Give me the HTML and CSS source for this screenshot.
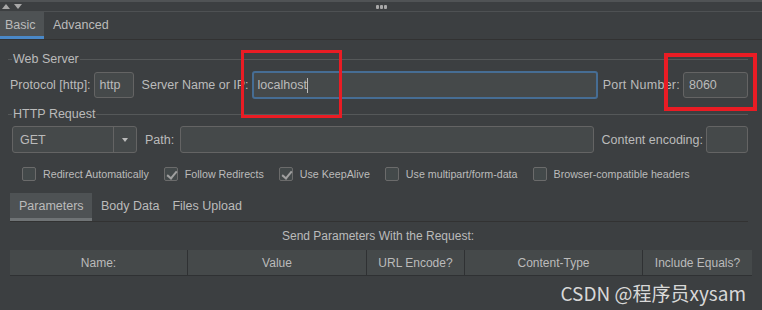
FILE: index.html
```html
<!DOCTYPE html>
<html lang="en">
<head>
    <meta charset="UTF-8">
    <meta name="viewport" content="width=device-width, initial-scale=1.0">
    <title>HTTP Request - Basic</title>
    <link rel="stylesheet" href="styles.css">
</head>
<body>
    <div class="splitbar">
        <div class="arrows">
            <span class="tri up"></span>
            <span class="tri down"></span>
        </div>
        <div class="grip"><i></i><i></i><i></i></div>
        <div></div>
    </div>

    <div class="tabs">
        <div class="tab active">Basic</div>
        <div class="tab">Advanced</div>
    </div>

    <div class="panel">
        <div class="group-title"><span>Web Server</span></div>

        <div class="row server-row">
            <label>Protocol [http]:</label>
            <div class="field proto">http</div>
            <label class="spaced">Server Name or IP:</label>
            <div class="field grow focused">localhost<span class="caret"></span></div>
            <label class="spaced port-label">Port Number:</label>
            <div class="field port">8060</div>
        </div>

        <div class="group-title second"><span>HTTP Request</span></div>

        <div class="row request-row">
            <div class="combo">
                <span class="combo-value">GET</span>
                <span class="combo-btn"><span class="tri down"></span></span>
            </div>
            <label class="spaced path-label">Path:</label>
            <div class="field grow"></div>
            <label class="spaced">Content encoding:</label>
            <div class="field enc"></div>
        </div>

        <div class="checks">
            <div class="check"><span class="box"></span>Redirect Automatically</div>
            <div class="check"><span class="box checked"></span>Follow Redirects</div>
            <div class="check"><span class="box checked"></span>Use KeepAlive</div>
            <div class="check"><span class="box"></span>Use multipart/form-data</div>
            <div class="check"><span class="box"></span>Browser-compatible headers</div>
        </div>

        <div class="subtabs">
            <div class="subtab active">Parameters</div>
            <div class="subtab">Body Data</div>
            <div class="subtab">Files Upload</div>
        </div>

        <div class="caption">Send Parameters With the Request:</div>

        <div class="table-head">
            <div>Name:</div>
            <div>Value</div>
            <div>URL Encode?</div>
            <div>Content-Type</div>
            <div>Include Equals?</div>
        </div>
    </div>

    <!-- 标注框 -->
    <div class="mark mark-server"></div>
    <div class="mark mark-port"></div>

    <div class="watermark">CSDN @程序员xysam</div>
</body>
</html>
```

FILE: styles.css
```css
* {
    box-sizing: border-box;
    margin: 0;
    padding: 0;
}

body {
    position: relative;
    width: 762px;
    height: 310px;
    overflow: hidden;
    background-color: #3c3f41;
    color: #bbbbbb;
    font-family: "Liberation Sans", Arial, sans-serif;
    font-size: 12px;
}

/* top split bar */
.splitbar {
    display: grid;
    grid-template-columns: 1fr auto 1fr;
    align-items: center;
    height: 12px;
    border-top: 2px solid #505355;
    border-bottom: 1px solid #4e5153;
}

.arrows {
    display: flex;
    gap: 4px;
    padding-left: 2px;
}

.tri {
    display: inline-block;
    width: 0;
    height: 0;
    border-left: 4px solid transparent;
    border-right: 4px solid transparent;
}

.tri.up {
    border-bottom: 5px solid #a8a8a8;
}

.tri.down {
    border-top: 5px solid #a8a8a8;
}

.grip {
    display: flex;
    gap: 1px;
}

.grip i {
    width: 3px;
    height: 4px;
    border-radius: 1px;
    background-color: #a8a8a8;
}

/* main tabs */
.tabs {
    display: flex;
    height: 28px;
    border-bottom: 1px solid #323232;
}

.tab {
    display: flex;
    align-items: center;
    padding: 0 8px 0 5px;
    font-size: 12.5px;
    border-bottom: 3px solid transparent;
    padding-top: 2px;
}

.tab.active {
    width: 44px;
    background-color: #4e5254;
    border-bottom-color: #4a88c7;
}

.tab + .tab {
    padding-left: 9px;
}

.panel {
    padding: 0 14px 0 8px;
}

.group-title {
    display: flex;
    align-items: center;
    height: 14px;
    margin-top: 12px;
}

.group-title.second {
    margin-top: 8px;
}

.group-title::before {
    content: "";
    width: 4px;
    border-top: 1px solid #555859;
}

.group-title::after {
    content: "";
    flex: 1;
    border-top: 1px solid #555859;
}

.group-title span {
    padding: 0 1px;
    font-size: 12.5px;
}

.row {
    display: flex;
    align-items: center;
    height: 28px;
    margin-top: 5px;
    font-size: 12.5px;
}

.server-row {
    padding-left: 2px;
}

.row label {
    margin-right: 3px;
    white-space: nowrap;
}

.row label.spaced {
    margin-left: 8px;
}

.row label.port-label {
    margin-left: 5px;
    letter-spacing: 0.25px;
}

.field {
    display: flex;
    align-items: center;
    height: 26px;
    padding: 0 5px;
    background-color: #45494a;
    border: 1px solid #646464;
    border-radius: 3px;
    color: #bbbbbb;
}

.field.grow {
    flex: 1;
}

.field.focused {
    height: 28px;
    border: 2px solid #466d94;
    padding-left: 4px;
}

.caret {
    display: inline-block;
    width: 1px;
    height: 15px;
    background-color: #bbbbbb;
}

.proto {
    width: 40px;
}

.port {
    width: 65px;
}

.request-row {
    height: 27px;
    margin-top: 5px;
    padding-left: 4px;
}

.request-row .field {
    height: 27px;
}

.row label.path-label {
    margin-right: 6px;
}

.combo {
    display: flex;
    width: 125px;
    height: 27px;
    background-color: #45494a;
    border: 1px solid #646464;
    border-radius: 3px;
}

.combo-value {
    flex: 1;
    display: flex;
    align-items: center;
    padding-left: 7px;
}

.combo-btn {
    display: flex;
    align-items: center;
    justify-content: center;
    width: 23px;
    border-left: 1px solid #646464;
}

.combo-btn .tri.down {
    border-left-width: 3px;
    border-right-width: 3px;
    border-top: 4px solid #bbbbbb;
}

.enc {
    width: 42px;
}

/* check boxes */
.checks {
    display: flex;
    align-items: center;
    gap: 15px;
    height: 14px;
    margin-top: 14px;
    padding-left: 14px;
    font-size: 10.7px;
}

.check {
    display: flex;
    align-items: center;
    gap: 7px;
    white-space: nowrap;
}

.box {
    position: relative;
    width: 14px;
    height: 14px;
    background-color: #43494a;
    border: 1px solid #6b6b6b;
    border-radius: 2px;
}

.box.checked::after {
    content: "";
    position: absolute;
    left: 4px;
    top: 1px;
    width: 4px;
    height: 8px;
    border-right: 2px solid #a0a0a0;
    border-bottom: 2px solid #a0a0a0;
    transform: rotate(40deg);
}

/* lower tabs */
.subtabs {
    display: flex;
    height: 29px;
    margin-top: 12px;
    margin-left: 2px;
    border-bottom: 1px solid #323232;
    font-size: 12.5px;
}

.subtab {
    display: flex;
    align-items: center;
    padding: 0 4px 0 9px;
    border-bottom: 3px solid transparent;
    padding-top: 1px;
}

.subtab.active {
    width: 82px;
    background-color: #4e5254;
    border-bottom-color: #6f7375;
}

.caption {
    height: 14px;
    margin-top: 7px;
    text-align: center;
    font-size: 12px;
}

.table-head {
    display: grid;
    grid-template-columns: 178px 179px 98px 178px 1fr;
    height: 26px;
    margin: 7px -4px 0 2px;
    background-color: #45494a;
    border-bottom: 1px solid #2f3133;
    font-size: 12px;
}

.table-head div {
    display: flex;
    align-items: center;
    justify-content: center;
    border-right: 1px solid #2f3133;
}

.table-head div:last-child {
    border-right: none;
}

/* red annotation boxes */
.mark {
    position: absolute;
    border: 3px solid #ea1c24;
}

.mark-server {
    left: 241px;
    top: 50px;
    width: 101px;
    height: 68px;
}

.mark-port {
    left: 664px;
    top: 53px;
    width: 93px;
    height: 58px;
    border-width: 4px;
}

.watermark {
    position: absolute;
    right: 16px;
    bottom: 4px;
    font-family: "Noto Sans CJK SC", sans-serif;
    font-size: 19px;
    line-height: 26px;
    color: #d8d8d8;
}
```
